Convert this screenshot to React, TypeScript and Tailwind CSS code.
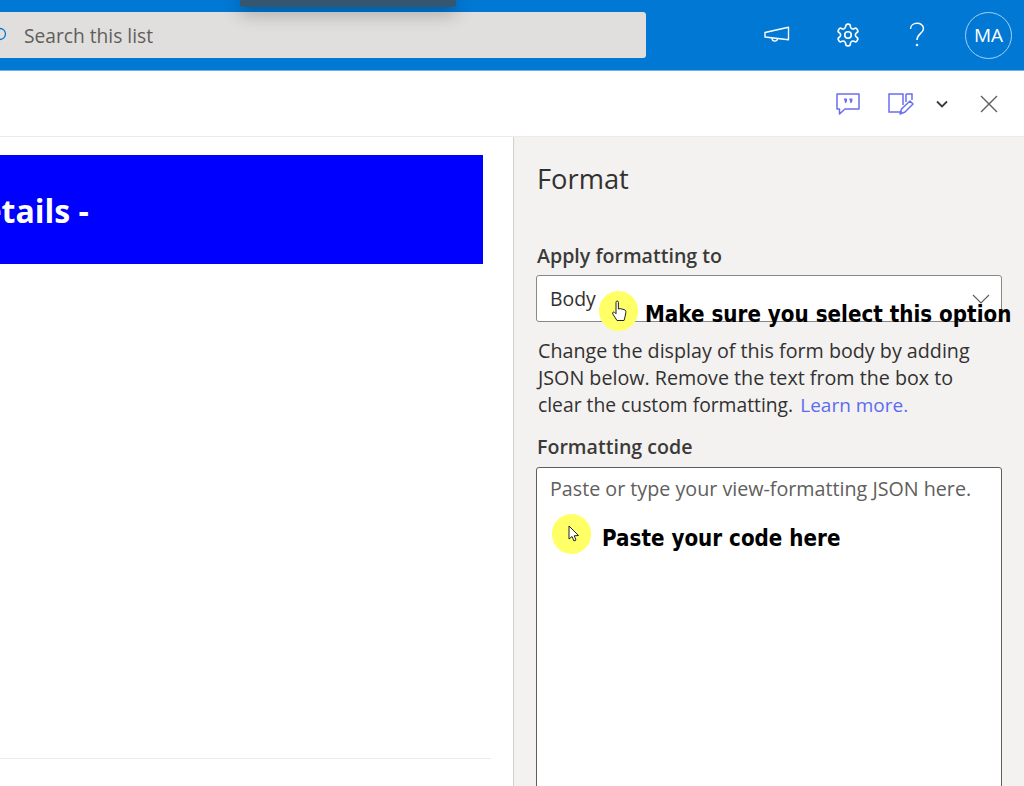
import React from "react";

const segoe = { fontFamily: '"Open Sans", "Noto Sans", sans-serif' };

function Megaphone() {
  return (
    <svg width="26" height="18" viewBox="0 0 26 18" fill="none" stroke="white" strokeWidth="1.4">
      <path d="M1 6.5 L24.5 1.2 V13.8 L1 11 Z" strokeLinejoin="round" />
      <path d="M8 12 C8 16 13.5 16 13.5 12.6" />
    </svg>
  );
}

function Gear() {
  return (
    <svg width="26" height="26" viewBox="0 0 24 24" fill="none" stroke="white" strokeWidth="1.5" strokeLinejoin="round">
      <path d="M12.22 2h-.44a2 2 0 0 0-2 2v.18a2 2 0 0 1-1 1.73l-.43.25a2 2 0 0 1-2 0l-.15-.08a2 2 0 0 0-2.73.73l-.22.38a2 2 0 0 0 .73 2.73l.15.1a2 2 0 0 1 1 1.72v.51a2 2 0 0 1-1 1.74l-.15.09a2 2 0 0 0-.73 2.73l.22.38a2 2 0 0 0 2.73.73l.15-.08a2 2 0 0 1 2 0l.43.25a2 2 0 0 1 1 1.73V20a2 2 0 0 0 2 2h.44a2 2 0 0 0 2-2v-.18a2 2 0 0 1 1-1.73l.43-.25a2 2 0 0 1 2 0l.15.08a2 2 0 0 0 2.73-.73l.22-.39a2 2 0 0 0-.73-2.73l-.15-.08a2 2 0 0 1-1-1.74v-.5a2 2 0 0 1 1-1.74l.15-.09a2 2 0 0 0 .73-2.73l-.22-.38a2 2 0 0 0-2.73-.73l-.15.08a2 2 0 0 1-2 0l-.43-.25a2 2 0 0 1-1-1.73V4a2 2 0 0 0-2-2z" />
      <circle cx="12" cy="12" r="3" />
    </svg>
  );
}

function Help() {
  return (
    <svg width="16" height="26" viewBox="0 0 16 26" fill="none" stroke="white" strokeWidth="1.5">
      <path d="M1.5 7 C1.5 -0.5 14.5 -0.5 14.5 6.5 C14.5 11.5 8 11.5 8 18" />
      <circle cx="8" cy="23" r="0.9" fill="white" strokeWidth="0.8" />
    </svg>
  );
}

function Comment() {
  return (
    <svg width="24" height="22" viewBox="0 0 24 22" fill="none" stroke="#6a6ff0" strokeWidth="1.5">
      <path d="M1 1 H23 V16 H9 L3.5 21 V16 H1 Z" strokeLinejoin="round" />
      <path d="M8 6 h2.4 v2 l-1.2 2 M13.4 6 h2.4 v2 l-1.2 2" strokeWidth="1.2" fill="#6a6ff0" />
    </svg>
  );
}

function EditForm() {
  return (
    <svg width="26" height="22" viewBox="0 0 26 22" fill="none" stroke="#6a6ff0" strokeWidth="1.5">
      <path d="M14 19 H1 V1 H15 V12" />
      <path d="M18 1 H24 V7" />
      <path d="M18 1 V9" />
      <path d="M12 21 L13.5 16 L22 8 L25 11 L17 19 Z" strokeLinejoin="round" />
    </svg>
  );
}

function Chevron() {
  return (
    <svg width="12" height="8" viewBox="0 0 12 8" fill="none" stroke="#3b3a39" strokeWidth="1.8">
      <path d="M1 1.5 L6 6.5 L11 1.5" />
    </svg>
  );
}

function Close() {
  return (
    <svg width="18" height="18" viewBox="0 0 18 18" fill="none" stroke="#605e5c" strokeWidth="1.4">
      <path d="M1 1 L17 17 M17 1 L1 17" />
    </svg>
  );
}

function Highlight({ className, children }: { className: string; children: React.ReactNode }) {
  return (
    <div className={"absolute flex h-[40px] w-[39px] items-center justify-center rounded-full bg-[#ffff66] " + className}>
      {children}
    </div>
  );
}

function Note({ className, children }: { className: string; children: React.ReactNode }) {
  return (
    <div
      className={"absolute whitespace-nowrap text-[23px] font-bold leading-[28px] text-black " + className}
      style={{ fontFamily: '"DejaVu Sans", sans-serif', transform: "scaleX(0.867)", transformOrigin: "left center" }}
    >
      {children}
    </div>
  );
}

export default function App() {
  return (
    <div className="relative h-[786px] w-[1024px] overflow-hidden bg-white" style={segoe}>
      <header className="relative flex h-[71px] items-center border-b border-[#6fb1e6] bg-[#0078d4]">
        <div className="ml-[-20px] flex h-[46px] w-[666px] items-center rounded-[3px] bg-[#e1dfdd]">
          <svg className="ml-[11px]" width="16" height="16" viewBox="0 0 16 16" fill="none" stroke="#0078d4" strokeWidth="1.3">
            <circle cx="9" cy="7" r="5.5" />
          </svg>
          <span className="ml-[17px] mt-[2px] text-[19.2px] text-[#605e5c]">Search this list</span>
        </div>
        <div className="ml-[118px] flex items-center">
          <Megaphone />
        </div>
        <div className="ml-[45px] flex items-center">
          <Gear />
        </div>
        <div className="ml-[48px] flex items-center">
          <Help />
        </div>
        <div className="ml-[40px] flex h-[47px] w-[47px] items-center justify-center rounded-full border border-[#a6d0f0] text-[19px] text-white">
          MA
        </div>
        <div className="absolute left-[240px] top-[-6px] h-[13px] w-[216px] rounded-[3px] bg-[#34566f] shadow-[0_6px_18px_rgba(0,0,0,0.3)]" />
      </header>

      <div className="flex h-[66px] items-center border-b border-[#edebe9] bg-white">
        <div className="ml-[836px] flex items-center">
          <Comment />
        </div>
        <div className="ml-[28px] flex items-center">
          <EditForm />
        </div>
        <div className="ml-[22px] flex items-center">
          <Chevron />
        </div>
        <div className="ml-[32px] flex items-center">
          <Close />
        </div>
      </div>

      <div className="flex h-[649px]">
        <div className="flex w-[513px] flex-col pr-[22px]">
          <div className="mt-[18px] flex h-[109px] w-[483px] items-center bg-[#0000ff]">
            <span className="ml-[-41px] mt-[2px] text-[32px] font-bold leading-none text-white">Details -</span>
          </div>
          <div className="mt-[494px] border-t border-[#edebe9]" />
        </div>

        <div className="flex w-[511px] flex-col border-l border-[#d2d0ce] bg-[#f3f2f1] pl-[22px]">
          <h2 className="ml-[1px] mt-[24px] shrink-0 text-[27.3px] leading-[36px] text-[#323130]">Format</h2>
          <label className="ml-[1px] mt-[45px] shrink-0 text-[19.6px] font-semibold leading-[28px] text-[#3b3a39]">Apply formatting to</label>
          <div className="mt-[5px] flex h-[47px] w-[466px] shrink-0 items-center justify-between rounded-[3px] border border-[#8a8886] bg-white pl-[13px] pr-[11px]">
            <span className="mt-[1px] text-[19.4px] text-[#323130]">Body</span>
            <svg width="18" height="10" viewBox="0 0 18 10" fill="none" stroke="#605e5c" strokeWidth="1.1">
              <path d="M1 1 L9 9 L17 1" />
            </svg>
          </div>
          <p className="ml-[2px] mt-[15px] w-[460px] shrink-0 text-[19.7px] leading-[27px] text-[#323130]">
            Change the display of this form body by adding JSON below. Remove the text from the box to <span className="text-[19.3px]">clear the custom formatting.</span>{" "}
            <span className="ml-[2px] text-[19px] text-[#5b6cf0]">Learn more.</span>
          </p>
          <label className="ml-[1px] mt-[14px] shrink-0 text-[19.6px] font-semibold leading-[28px] text-[#3b3a39]">Formatting code</label>
          <div className="mt-[6px] h-[340px] w-[466px] shrink-0 rounded-[3px] border border-[#605e5c] bg-white pl-[13px] pt-[7px]">
            <span className="text-[19.7px] leading-[28px] text-[#605e5c]">Paste or type your view-formatting JSON here.</span>
          </div>
        </div>
      </div>

      <Highlight className="left-[599px] top-[291px]">
        <svg width="16" height="22" viewBox="0 0 16 22" fill="white" stroke="#222" strokeWidth="1">
          <path d="M5 2.2 C5 0.6 7.4 0.6 7.4 2.2 V9 L9.2 8.6 L13 9.6 C14.6 10 15 11 14.8 12.5 L14 17 L13 20.5 H6 L1.8 14 C1 12.6 2.4 11.4 3.6 12.4 L5 13.8 Z" strokeLinejoin="round" />
        </svg>
      </Highlight>
      <Note className="left-[645px] top-[300px]">Make sure you select this option</Note>

      <Highlight className="left-[552px] top-[514px]">
        <svg className="ml-[4px]" width="12" height="18" viewBox="0 0 12 18" fill="white" stroke="#222" strokeWidth="1">
          <path d="M1 1 V14 L4 11.5 L6 16 L8 15 L6.2 10.8 L10.5 10.5 Z" strokeLinejoin="round" />
        </svg>
      </Highlight>
      <Note className="left-[602px] top-[524px]">Paste your code here</Note>
    </div>
  );
}
